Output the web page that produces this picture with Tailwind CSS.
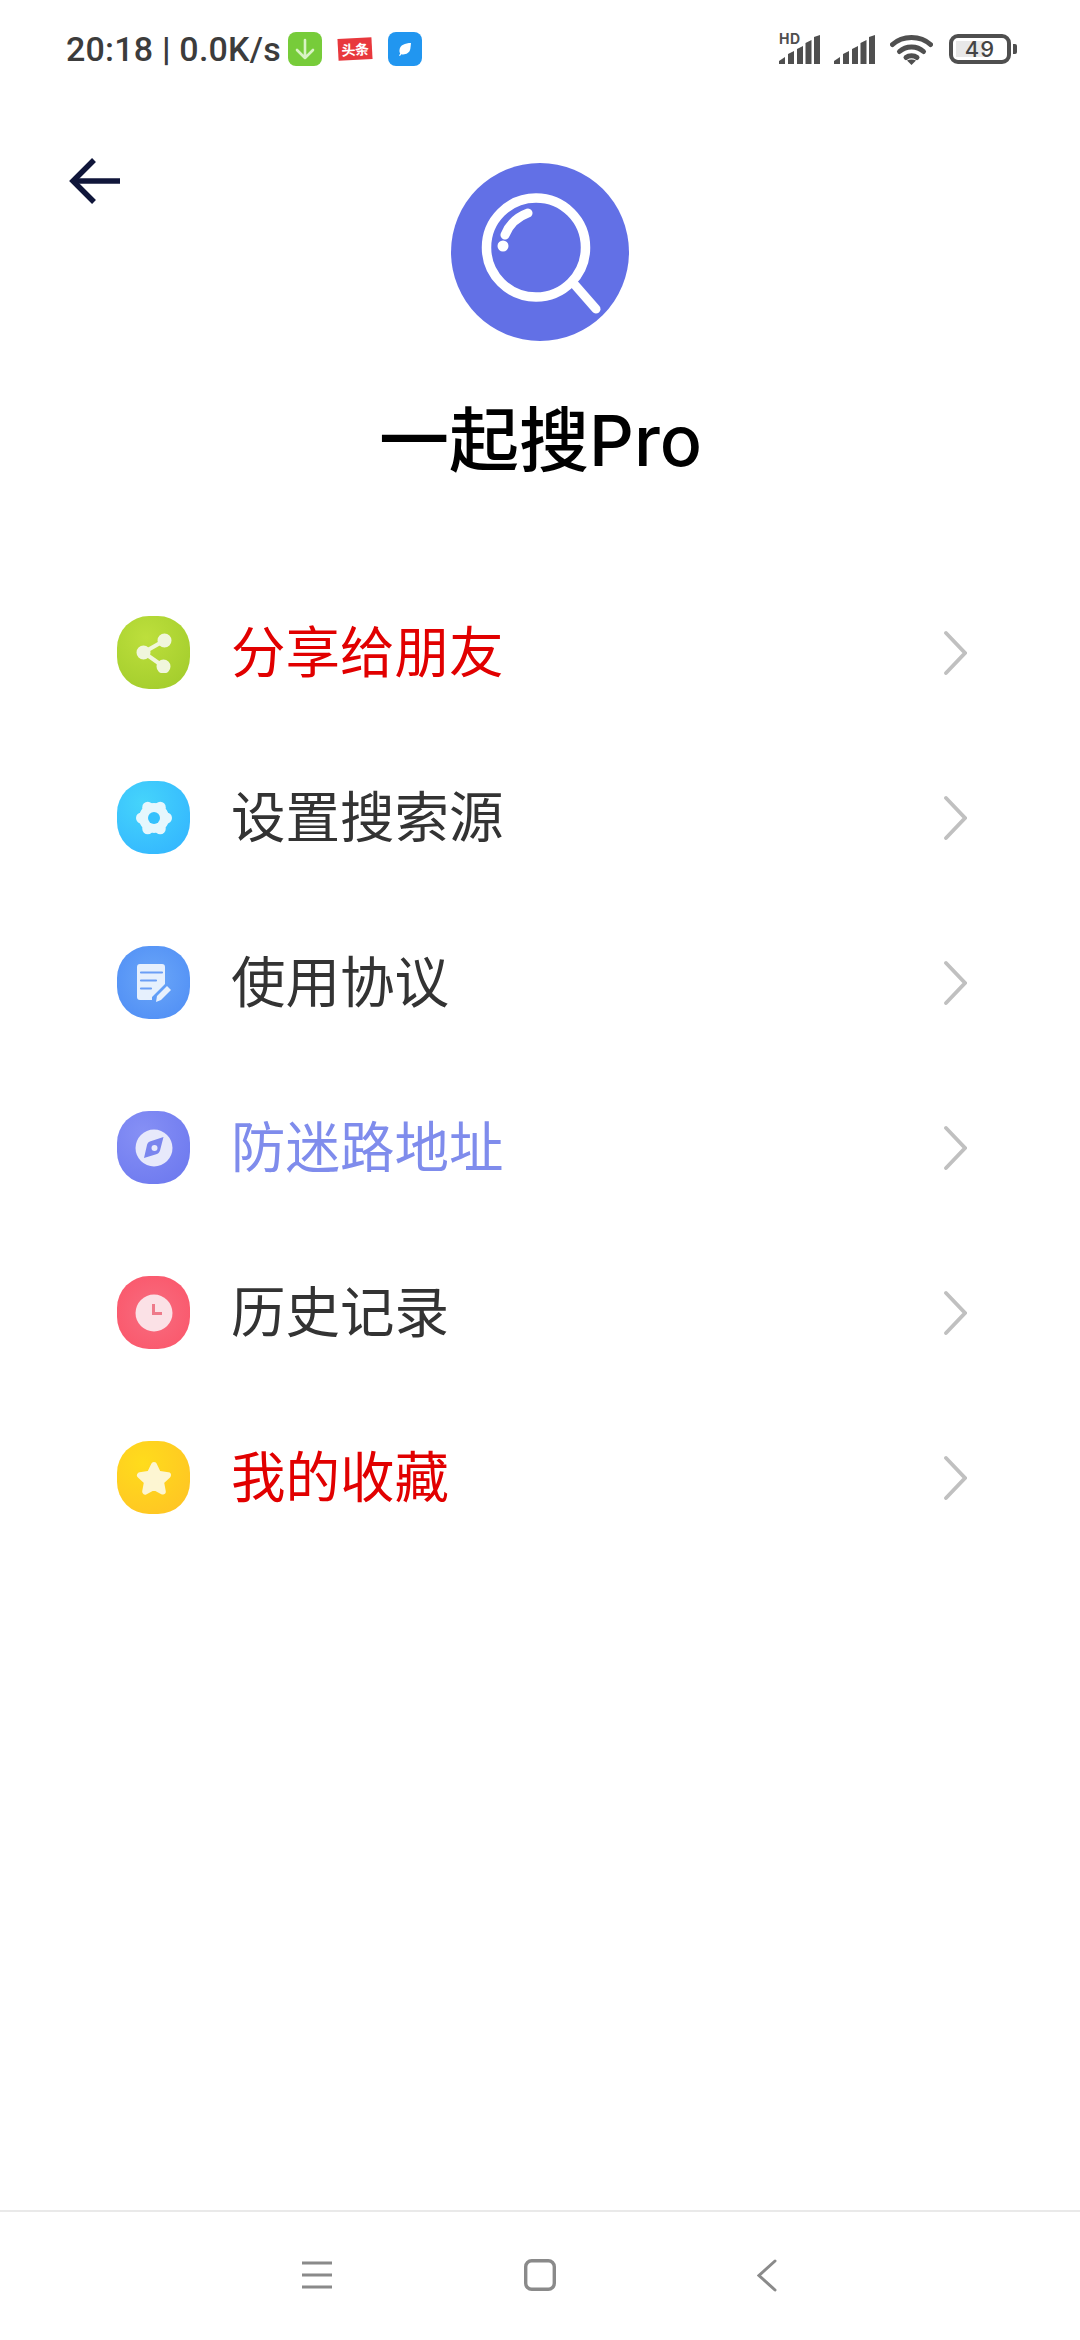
<!DOCTYPE html>
<html lang="zh-CN">
<head>
  <meta charset="UTF-8" />
  <title>一起搜Pro</title>
  <script src="https://cdn.jsdelivr.net/npm/@tailwindcss/browser@4"></script>
</head>
<body class="bg-white font-['Inter','Noto_Sans_CJK_SC',sans-serif]">
  <div class="w-[1080px] h-[2340px] flex flex-col overflow-hidden">

    <!-- status bar -->
    <div class="h-[98px] shrink-0 flex items-center pl-[66px] pr-[63px]">
      <span class="text-[34px] font-medium font-['Roboto',sans-serif] text-[#3c3c3c] tracking-[0.2px] w-[222px] whitespace-nowrap">20:18 <b class="font-bold">|</b> 0.0K/s</span>
      <div class="w-[34px] h-[34px] rounded-[8px] bg-[#77cc3a] flex items-center justify-center">
        <svg width="22" height="24" viewBox="0 0 22 24" fill="none" stroke="#d9f3c4" stroke-width="2.600" stroke-linecap="round" stroke-linejoin="round"><path d="M11 3v18M3 13l8 8 8-8"/></svg>
      </div>
      <div class="w-[34px] h-[22px] ml-4 bg-[#e8383d] -rotate-3 flex items-center justify-center text-white text-[14px] font-bold leading-none tracking-[-0.5px] font-['Noto_Sans_CJK_SC',sans-serif]">头条</div>
      <div class="w-[34px] h-[34px] ml-4 rounded-[8px] bg-[#2196f0] flex items-center justify-center">
        <svg width="18" height="18" viewBox="0 0 18 18" fill="#fff"><path d="M15 3C9 3 4 5 3.500 10c-.2 1.500 .2 2.800 .7 3.500L3 15.500l1 .5 1.300-1.800c3.700 .8 8.200-.7 9-5.200 .3-2 .5-4 .7-6z"/></svg>
      </div>
      <div class="flex-1"></div>
      <!-- signal, wifi, battery -->
      <div class="relative w-[41px] h-[30px]">
        <span class="absolute left-0 top-[-2px] text-[14px] font-bold leading-none tracking-[0.5px] text-[#4f4f4f]">HD</span>
        <svg class="absolute inset-0" width="41" height="30" viewBox="0 0 41 30" fill="#4f4f4f"><path d="M0 30v-3l6-4v7zM9 30V20l6-3v13zM18 30V15l6-3v18zM26.500 30V9l6-3v24zM35 30V3l6-2v29z"/></svg>
      </div>
      <svg class="ml-[14px]" width="41" height="30" viewBox="0 0 41 30" fill="#4f4f4f"><path d="M0 30v-3l6-4v7zM9 30V20l6-3v13zM18 30V15l6-3v18zM26.500 30V9l6-3v24zM35 30V3l6-2v29z"/></svg>
      <svg class="ml-[15px]" width="43" height="31" viewBox="0 0 43 31" fill="none" stroke="#4f4f4f" stroke-width="5" stroke-linecap="round"><path d="M2.500 10.500C12.500 1 30.500 1 40.500 10.500"/><path d="M9.500 17.500c6.500-6 17.500-6 24 0"/><path d="M16 23.500c3-2.500 8-2.500 11 0"/><path d="M21.500 31l-4.500-4.500c2.500-1.500 6.500-1.500 9 0z" fill="#4f4f4f" stroke="none"/></svg>
      <div class="ml-4 relative w-[62px] h-[30px] rounded-[9px] border-[4px] border-[#4f4f4f] flex items-center justify-center">
        <div class="absolute left-[3px] top-[3px] bottom-[3px] w-[29px] bg-[#e8e8e8]"></div>
        <span class="relative text-[22px] font-medium leading-none text-[#444] tracking-[1px]">49</span>
      </div>
      <div class="ml-[2px] w-[4px] h-[10px] rounded-r-[2px] bg-[#4f4f4f]"></div>
    </div>

    <!-- app header -->
    <div class="h-[472px] shrink-0 relative flex flex-col items-center pt-[65px]">
      <button class="absolute left-[69px] top-[59px]">
        <svg width="52" height="48" viewBox="0 0 52 48" fill="none" stroke="#10163a" stroke-width="5.500"><path d="M51 24H4"/><path d="M25 3 4 24l21 21"/></svg>
      </button>
      <div class="w-[178px] h-[178px] rounded-full bg-[#6270e6]">
        <svg width="178" height="178" viewBox="0 0 178 178" fill="none" stroke="#fff" stroke-linecap="round">
          <circle cx="85" cy="84.500" r="49.500" stroke-width="9.500"/>
          <path d="M124 122l21 24" stroke-width="9"/>
          <path d="M54 72c4-10 12-18 23-22" stroke-width="9"/>
          <circle cx="52" cy="83" r="4" fill="#fff" stroke-width="3"/>
        </svg>
      </div>
      <h1 class="mt-[55px] text-[70px] leading-[90px] font-medium text-black ml-[1px]">一起搜Pro</h1>
    </div>

    <!-- menu list -->
    <ul class="flex-1 flex flex-col pl-[117px] pr-[113px]">
      <li class="h-[165px] flex items-center">
        <div class="w-[73px] h-[73px] rounded-[32px] bg-[radial-gradient(circle_at_40%_30%,#bddf3c,#9fca2a)] flex items-center justify-center">
          <svg width="40" height="40" viewBox="0 0 40 40" fill="#f0f6dc" stroke="#f0f6dc" stroke-width="4"><path d="M30.500 7.500 9.500 19.500l20 14" fill="none"/><circle cx="30.500" cy="7.500" r="5"/><circle cx="9.500" cy="19.500" r="5"/><circle cx="29.500" cy="33.500" r="5"/></svg>
        </div>
        <span class="ml-[41px] flex-1 text-[54.500px] leading-none text-[#e10000]">分享给朋友</span>
        <svg width="24" height="46" viewBox="0 0 24 46" fill="none" stroke="#c0c0c0" stroke-width="3.800" stroke-linecap="round"><path d="M3 3l19 20L3 43"/></svg>
      </li>
      <li class="h-[165px] flex items-center">
        <div class="w-[73px] h-[73px] rounded-[32px] bg-[radial-gradient(circle_at_35%_30%,#45d4fb,#31b2ff)] flex items-center justify-center">
          <!-- gear: hub plus six round lobes -->
          <svg width="38" height="38" viewBox="0 0 38 38" fill="#e6f7fd"><circle cx="19" cy="19" r="15"/><circle cx="31.500" cy="19" r="5.500"/><circle cx="25.250" cy="29.800" r="5.500"/><circle cx="12.750" cy="29.800" r="5.500"/><circle cx="6.500" cy="19" r="5.500"/><circle cx="12.750" cy="8.200" r="5.500"/><circle cx="25.250" cy="8.200" r="5.500"/><circle cx="19" cy="19" r="6" fill="#35c1fd"/></svg>
        </div>
        <span class="ml-[41px] flex-1 text-[54.500px] leading-none text-[#333]">设置搜索源</span>
        <svg width="24" height="46" viewBox="0 0 24 46" fill="none" stroke="#c0c0c0" stroke-width="3.800" stroke-linecap="round"><path d="M3 3l19 20L3 43"/></svg>
      </li>
      <li class="h-[165px] flex items-center">
        <div class="w-[73px] h-[73px] rounded-[32px] bg-[radial-gradient(circle_at_50%_45%,#6aa6f8,#4d8cf5)] flex items-center justify-center">
          <svg width="34" height="38" viewBox="0 0 34 38"><path fill="#e6f0fd" d="M3 0h22a3 3 0 0 1 3 3v17L15 33v3H3a3 3 0 0 1-3-3V3a3 3 0 0 1 3-3z"/><path d="M4 8.500h21M4 16.500h15M4 24.500h10" stroke="#6a9ef6" stroke-width="2.200" stroke-linecap="round"/><path d="M19 38l1-6 10-10 4 4-10 10z" fill="#e6f0fd"/></svg>
        </div>
        <span class="ml-[41px] flex-1 text-[54.500px] leading-none text-[#333]">使用协议</span>
        <svg width="24" height="46" viewBox="0 0 24 46" fill="none" stroke="#c0c0c0" stroke-width="3.800" stroke-linecap="round"><path d="M3 3l19 20L3 43"/></svg>
      </li>
      <li class="h-[165px] flex items-center">
        <div class="w-[73px] h-[73px] rounded-[32px] bg-[radial-gradient(circle_at_35%_30%,#8690f5,#6a76ee)] flex items-center justify-center">
          <svg width="38" height="38" viewBox="0 0 38 38"><circle cx="19" cy="19" r="18.500" fill="#e7e9fb"/><path fill="#7a85ee" d="M28.500 8 25 21.500c-.5 1.800-2 3.300-3.800 3.800L9 29l3-13c.4-1.800 1.800-3.200 3.600-3.700z"/><circle cx="19.500" cy="19" r="3" fill="#e7e9fb"/></svg>
        </div>
        <span class="ml-[41px] flex-1 text-[54.500px] leading-none text-[#7f8cec]">防迷路地址</span>
        <svg width="24" height="46" viewBox="0 0 24 46" fill="none" stroke="#c0c0c0" stroke-width="3.800" stroke-linecap="round"><path d="M3 3l19 20L3 43"/></svg>
      </li>
      <li class="h-[165px] flex items-center">
        <div class="w-[73px] h-[73px] rounded-[32px] bg-[radial-gradient(circle_at_50%_50%,#f76d80,#fb5468)] flex items-center justify-center">
          <svg width="38" height="38" viewBox="0 0 38 38" fill="none"><circle cx="19" cy="19" r="18.500" fill="#fbe1e6"/><path d="M18.500 10v9.500H27" stroke="#ee7a8a" stroke-width="3"/></svg>
        </div>
        <span class="ml-[41px] flex-1 text-[54.500px] leading-none text-[#333]">历史记录</span>
        <svg width="24" height="46" viewBox="0 0 24 46" fill="none" stroke="#c0c0c0" stroke-width="3.800" stroke-linecap="round"><path d="M3 3l19 20L3 43"/></svg>
      </li>
      <li class="h-[165px] flex items-center">
        <div class="w-[73px] h-[73px] rounded-[32px] bg-[radial-gradient(circle_at_35%_30%,#ffdc1c,#ffc125)] flex items-center justify-center">
          <svg width="38" height="36" viewBox="0 0 38 36"><path fill="#fdf6d2" stroke="#fdf6d2" stroke-width="6" stroke-linejoin="round" d="M19 5l4.200 8.800 9.800 1.400-7 6.600 1.800 9.800L19 26.800l-8.800 4.800 1.800-9.800-7-6.600 9.800-1.400z"/></svg>
        </div>
        <span class="ml-[41px] flex-1 text-[54.500px] leading-none text-[#e10000]">我的收藏</span>
        <svg width="24" height="46" viewBox="0 0 24 46" fill="none" stroke="#c0c0c0" stroke-width="3.800" stroke-linecap="round"><path d="M3 3l19 20L3 43"/></svg>
      </li>
    </ul>

    <!-- navigation bar -->
    <div class="h-[130px] shrink-0 border-t-2 border-[#e9e9e9] flex items-start pt-[48px] pl-[302px]">
      <svg width="30" height="30" viewBox="0 0 30 30" stroke="#8a8a8a" stroke-width="3"><path d="M0 3h30M0 15h30M0 27h30"/></svg>
      <svg class="ml-[192px] -mt-[1px]" width="32" height="32" viewBox="0 0 32 32" fill="none" stroke="#8a8a8a" stroke-width="3.400"><rect x="1.700" y="1.700" width="28.600" height="28.600" rx="6"/></svg>
      <svg class="ml-[201px] -mt-[1px]" width="20" height="33" viewBox="0 0 20 33" fill="none" stroke="#8a8a8a" stroke-width="3" stroke-linecap="round"><path d="M18 2 2 16.500 18 31"/></svg>
    </div>
  </div>
</body>
</html>
